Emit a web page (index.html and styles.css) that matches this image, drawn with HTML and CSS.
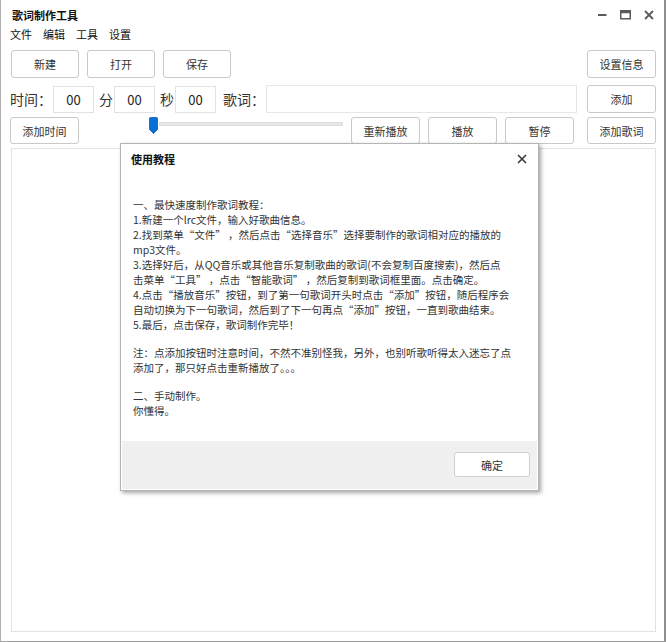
FILE: index.html
```html
<!DOCTYPE html>
<html lang="zh-CN">
<head>
<meta charset="utf-8">
<title>歌词制作工具</title>
<link rel="stylesheet" href="styles.css">
</head>
<body>
<div class="window">
  <div class="titlebar">
    <span class="title">歌词制作工具</span>
    <div class="controls">
      <svg class="ctl" width="9" height="10" viewBox="0 0 9 10"><rect x="0" y="4" width="8.5" height="2" fill="#5a5a5a"/></svg>
      <svg class="ctl" width="11" height="10" viewBox="0 0 11 10"><rect x="0.75" y="0.75" width="9.5" height="8" fill="none" stroke="#5a5a5a" stroke-width="1.5"/><rect x="0.75" y="0.75" width="9.5" height="2.5" fill="#5a5a5a"/></svg>
      <svg class="ctl" width="10" height="10" viewBox="0 0 10 10"><path d="M1 1 L9 9 M9 1 L1 9" stroke="#5a5a5a" stroke-width="1.8"/></svg>
    </div>
  </div>
  <div class="menu">
    <span>文件</span><span>编辑</span><span>工具</span><span>设置</span>
  </div>
  <div class="row row1">
    <button class="btn">新建</button>
    <button class="btn">打开</button>
    <button class="btn">保存</button>
    <button class="btn push">设置信息</button>
  </div>
  <div class="row row2">
    <span class="lbl">时间：</span>
    <div class="num">00</div>
    <span class="lbl unit">分</span>
    <div class="num">00</div>
    <span class="lbl unit">秒</span>
    <div class="num">00</div>
    <span class="lbl lyr">歌词：</span>
    <div class="lyric-input"></div>
    <button class="btn push">添加</button>
  </div>
  <div class="row row3">
    <button class="btn">添加时间</button>
    <div class="slider">
      <svg class="thumb" width="9" height="17" viewBox="0 0 9 17"><path d="M0.5 1.5 Q0.5 0.5 1.5 0.5 H7.5 Q8.5 0.5 8.5 1.5 V12.5 L4.5 16.5 L0.5 12.5 Z" fill="#0a6fd6" stroke="#0a5cb8" stroke-width="0.8"/></svg>
      <div class="track"></div>
    </div>
    <button class="btn replay">重新播放</button>
    <button class="btn">播放</button>
    <button class="btn">暂停</button>
    <button class="btn push">添加歌词</button>
  </div>
  <div class="editor"></div>

  <div class="dialog">
    <div class="dlg-head">
      <span class="dlg-title">使用教程</span>
      <svg class="dlg-close" width="10" height="10" viewBox="0 0 10 10"><path d="M1 1 L9 9 M9 1 L1 9" stroke="#3c3c3c" stroke-width="1.7"/></svg>
    </div>
    <div class="dlg-body">
      <p>一、最快速度制作歌词教程：</p>
      <p>1.新建一个lrc文件，输入好歌曲信息。</p>
      <p>2.找到菜单“文件” ，然后点击“选择音乐”选择要制作的歌词相对应的播放的</p>
      <p>mp3文件。</p>
      <p>3.选择好后，从QQ音乐或其他音乐复制歌曲的歌词(不会复制百度搜索)，然后点</p>
      <p>击菜单“工具” ，点击“智能歌词” ，然后复制到歌词框里面。点击确定。</p>
      <p>4.点击“播放音乐”按钮，到了第一句歌词开头时点击“添加”按钮，随后程序会</p>
      <p>自动切换为下一句歌词，然后到了下一句再点“添加”按钮，一直到歌曲结束。</p>
      <p>5.最后，点击保存，歌词制作完毕！</p>
      <p class="gap"></p>
      <p>注：点添加按钮时注意时间，不然不准别怪我，另外，也别听歌听得太入迷忘了点</p>
      <p>添加了，那只好点击重新播放了。。。</p>
      <p class="gap"></p>
      <p>二、手动制作。</p>
      <p>你懂得。</p>
    </div>
    <div class="dlg-foot">
      <button class="btn ok">确定</button>
    </div>
  </div>
</div>
</body>
</html>
```
FILE: styles.css
```css
* { box-sizing: border-box; }
html, body { margin: 0; padding: 0; background: #ffffff; overflow: hidden; }
body {
  font-family: "Noto Sans CJK SC", "Noto Sans", "Liberation Sans", sans-serif;
  color: #333;
}
.window {
  position: relative;
  width: 666px;
  height: 642px;
  background: #fff;
  border-left: 1px solid #b0b0b0;
  border-right: 2px solid #8e8e8e;
  border-bottom: 1px solid #a0a0a0;
  padding: 0 8px 0 9px;
}
.titlebar {
  height: 27px;
  display: flex;
  align-items: center;
  padding-top: 3px;
}
.title {
  font-size: 11px;
  font-weight: bold;
  color: #111;
  margin-left: 2px;
}
.controls {
  margin-left: auto;
  display: flex;
  align-items: center;
  gap: 13px;
  margin-right: 2px;
}
.ctl { display: block; }
.menu {
  height: 15px;
  display: flex;
  gap: 11px;
  font-size: 11px;
  line-height: 15px;
  color: #111;
}
.row { display: flex; align-items: center; }
.row1 { margin-top: 8px; height: 28px; padding-left: 1px; gap: 8px; }
.row2 { margin-top: 7px; height: 28px; }
.row3 { margin-top: 4px; height: 27px; align-items: flex-start; }
.btn {
  font-family: inherit;
  font-size: 11px;
  color: #333;
  background: #fff;
  border: 1px solid #c9c9c9;
  border-radius: 3px;
  width: 68px;
  height: 28px;
  padding: 0;
  margin: 0;
}
.push { margin-left: auto; width: 69px; }
.row3 .btn { height: 27px; width: 69px; }
.lbl {
  font-family: "Noto Sans CJK JP", "Noto Sans CJK SC", sans-serif;
  font-size: 14px;
  color: #333;
  white-space: nowrap;
  line-height: 20px;
}
.num {
  width: 41px;
  height: 27px;
  border: 1px solid #e2e2e2;
  font-size: 13px;
  line-height: 25px;
  text-align: center;
  color: #222;
  margin-left: 1px;
}
.unit { margin-left: 5px; }
.lyr { margin-left: 7px; }
.lyric-input {
  width: 311px;
  height: 28px;
  border: 1px solid #e6e6e6;
  margin-left: 1px;
}
.slider {
  display: flex;
  align-items: flex-start;
  margin-left: 70px;
  width: 194px;
  height: 27px;
}
.thumb { display: block; }
.track {
  margin-top: 5px;
  margin-left: 1px;
  width: 184px;
  height: 4px;
  background: #e8e8e8;
  border: 1px solid #dcdcdc;
  border-radius: 1px;
}
.replay { margin-left: 8px; }
.row3 .btn + .btn:not(.replay):not(.push) { margin-left: 8px; }
.editor {
  margin-top: 4px;
  height: 484px;
  border: 1px solid #e2e2e2;
  margin-left: 1px;
}
.dialog {
  position: absolute;
  left: 119px;
  top: 143px;
  width: 419px;
  height: 348px;
  background: #fff;
  border: 1px solid #b4b4b4;
  box-shadow: 2px 2px 4px rgba(0, 0, 0, 0.35);
  display: flex;
  flex-direction: column;
  padding: 0 1px 1px 1px;
}
.dlg-head {
  height: 30px;
  display: flex;
  align-items: center;
  padding: 0 10px 0 9px;
}
.dlg-title { font-size: 11px; font-weight: bold; color: #111; }
.dlg-close { margin-left: auto; display: block; }
.dlg-body {
  flex: 1;
  padding: 23px 0 0 11px;
  font-size: 10.5px;
  line-height: 15px;
  color: #333;
}
.dlg-body p { margin: 0; white-space: nowrap; }
.dlg-body p.gap { height: 13px; }
.dlg-foot {
  height: 48px;
  background: #f0f0f0;
  display: flex;
  justify-content: flex-end;
  align-items: flex-start;
  padding: 11px 7px 0 0;
}
.ok { width: 76px; height: 25px; border-color: #cfcfcf; }
```
